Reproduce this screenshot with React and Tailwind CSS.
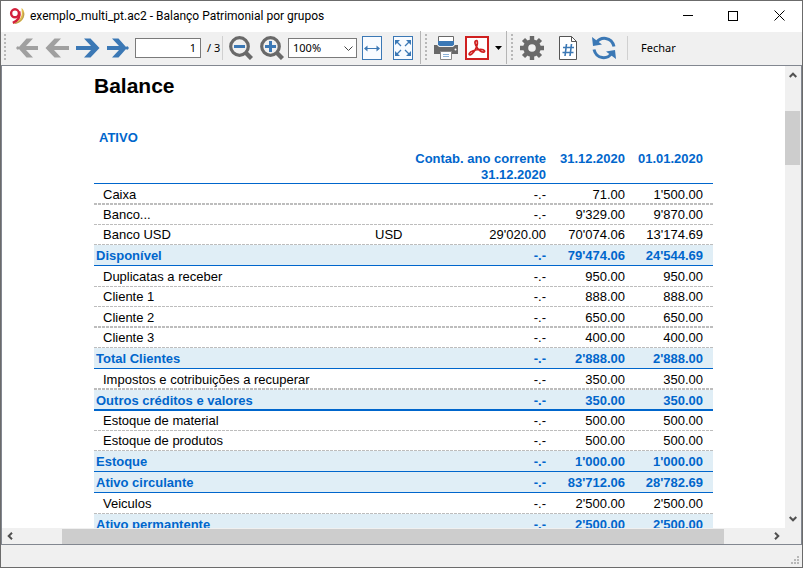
import React from "react";

const rows = [
  { name: "Caixa", v: ["-.-", "71.00", "1'500.00"], h: 21, line: "dash2" },
  { name: "Banco...", v: ["-.-", "9'329.00", "9'870.00"], h: 20 },
  { name: "Banco USD", cur: "USD", v: ["29'020.00", "70'074.06", "13'174.69"], h: 20 },
  { name: "Disponível", v: ["-.-", "79'474.06", "24'544.69"], total: true },
  { name: "Duplicatas a receber", v: ["-.-", "950.00", "950.00"], h: 21 },
  { name: "Cliente 1", v: ["-.-", "888.00", "888.00"], h: 20 },
  { name: "Cliente 2", v: ["-.-", "650.00", "650.00"], h: 21, line: "dash2" },
  { name: "Cliente 3", v: ["-.-", "400.00", "400.00"], h: 20 },
  { name: "Total Clientes", v: ["-.-", "2'888.00", "2'888.00"], total: true },
  { name: "Impostos e cotribuições a recuperar", v: ["-.-", "350.00", "350.00"], h: 21, line: "dash2" },
  { name: "Outros créditos e valores", v: ["-.-", "350.00", "350.00"], total: true, line: "solid2" },
  { name: "Estoque de material", v: ["-.-", "500.00", "500.00"], h: 20 },
  { name: "Estoque de produtos", v: ["-.-", "500.00", "500.00"], h: 20 },
  { name: "Estoque", v: ["-.-", "1'000.00", "1'000.00"], total: true },
  { name: "Ativo circulante", v: ["-.-", "83'712.06", "28'782.69"], total: true },
  { name: "Veiculos", v: ["-.-", "2'500.00", "2'500.00"], h: 21 },
  { name: "Ativo permantente", v: ["-.-", "2'500.00", "2'500.00"], total: true },
];

const dash = "bg-[repeating-linear-gradient(90deg,#bdbdbd_0px,#bdbdbd_3px,transparent_3px,transparent_4px)] bg-no-repeat bg-bottom";
const lineClass = {
  dash1: `${dash} bg-[length:100%_1px]`,
  dash2: `${dash} bg-[length:100%_2px]`,
  solid1: "bg-[#e0eef6] bg-linear-to-r from-[#0066cc] to-[#0066cc] bg-no-repeat bg-bottom bg-[length:100%_1px]",
  solid2: "bg-[#e0eef6] bg-linear-to-r from-[#0066cc] to-[#0066cc] bg-no-repeat bg-bottom bg-[length:100%_2px]",
};

function Row({ row }) {
  const line = row.line || (row.total ? "solid1" : "dash1");
  const height = row.total || row.h === 21 ? "h-[21px]" : "h-5";
  return (
    <tr className={`${height} leading-5 ${lineClass[line]} ${row.total ? "font-bold text-[#0066cc]" : "text-black"}`}>
      <th scope="row" className={`p-0 text-left ${row.total ? "pl-0.5 font-bold" : "pl-[9px] font-normal"}`}>{row.name}</th>
      <td className="p-0">{row.cur}</td>
      <td className="p-0 text-right">{row.v[0]}</td>
      <td className="p-0 text-right">{row.v[1]}</td>
      <td className="p-0 pr-2.5 text-right">{row.v[2]}</td>
    </tr>
  );
}

function Logo() {
  return (
    <svg className="size-4 shrink-0" viewBox="0 0 16 16" fill="none" aria-hidden="true">
      <path d="M12.500 0C15.500 2 16.500 7 14 11c-2 3.500-5.500 5-10 4.700C9 14 12.500 10 12.800 5.500z" fill="#e3bd4a" />
      <path d="M14.500 4.500c1 5-2.500 9.500-8.500 11" stroke="#a8905a" strokeWidth=".8" />
      <ellipse cx="6" cy="5.300" rx="3.900" ry="4" stroke="#d3203c" strokeWidth="2.400" />
      <path d="M10.300 3.500c1.200 5-1 9-6.500 11.300" stroke="#d3203c" strokeWidth="2.400" />
    </svg>
  );
}

function Arrow({ color, flip, end }) {
  return (
    <svg className={`h-5 w-6 ${flip ? "-scale-x-100" : ""}`} viewBox="0 0 24 20" fill={color} aria-hidden="true">
      {end ? (
        <path d="M0 8h12L5 .5h6.500L18.800 8.700h.4a1.600 1.600 0 1 1 0 2.600h-.4L11.500 19.500H5L12 12H0z" />
      ) : (
        <path d="M0 8h15L8 .5h6.500L23.500 10l-9 9.500H8L15 12H0z" />
      )}
    </svg>
  );
}

function Magnifier({ plus }) {
  return (
    <svg className="size-6" viewBox="0 0 24 24" fill="none" aria-hidden="true">
      <circle cx="10.500" cy="10.500" r="8.800" stroke="#696969" strokeWidth="3.200" />
      <path d="M16.500 16.500l6 6" stroke="#696969" strokeWidth="4.400" />
      <path d={plus ? "M5 10.500h11M10.500 5v11" : "M5 10.500h11"} stroke="#3b78b5" strokeWidth="3" />
    </svg>
  );
}

function FitWidth() {
  return (
    <svg className="h-6 w-5" viewBox="0 0 20 24" fill="none" stroke="#3b78b5" aria-hidden="true">
      <rect x=".5" y=".5" width="19" height="23" fill="#f8fbff" />
      <path d="M3 12.500h14" />
      <path d="M5.500 9.500v6l-3.500-3zM14.500 9.500v6l3.500-3z" fill="#3b78b5" stroke="none" />
    </svg>
  );
}

function FitPage() {
  return (
    <svg className="h-6 w-5" viewBox="0 0 20 24" fill="none" stroke="#3b78b5" aria-hidden="true">
      <rect x=".5" y=".5" width="19" height="23" fill="#f8fbff" />
      <path d="M3 5l5 5M17 5l-5 5M3 19l5-5M17 19l-5-5" strokeWidth="1.300" />
      <path d="M2 4h5L2 9zM18 4h-5L18 9zM2 20h5L2 15zM18 20h-5l5-5z" fill="#3b78b5" stroke="none" />
    </svg>
  );
}

function Printer() {
  return (
    <svg className="size-6" viewBox="0 0 24 24" aria-hidden="true">
      <path d="M4.500.5h15V6h-15z" fill="#fff" stroke="#696969" />
      <path d="M0 9h24v9H0z" fill="#696969" />
      <path d="M3 5h18v4l-2 2H5L3 9z" fill="#f0f0f0" />
      <path d="M4 5h16v3.500L18.500 10h-13L4 8.500z" fill="#3b78b5" />
      <path d="M6.500 15.500h11v8h-11z" fill="#fff" stroke="#8a8a8a" />
      <path d="M9 18.500h6M9 20.500h6" stroke="#8db3d8" />
      <circle cx="21.500" cy="13.500" r="1" fill="#fff" />
    </svg>
  );
}

function Pdf() {
  return (
    <svg className="size-6" viewBox="0 0 24 24" fill="none" stroke="#cf2020" aria-hidden="true">
      <rect x="1" y="1" width="22" height="22" fill="#fff" strokeWidth="2" />
      <path d="M10.500 5c2-1.500 2.500 1.300 1.200 5.500-1.400 4-4.500 8-6.500 8.300-2 .2-1.300-2.600 3-4 4.500-1.500 10-2 11.300 0 .8 2-2.500 1.700-5-.5-2.800-2.500-5.800-7.800-4-9.300z" strokeWidth="1.700" />
    </svg>
  );
}

function Gear() {
  return (
    <svg className="size-6" viewBox="0 0 24 24" fill="none" stroke="#696969" aria-hidden="true">
      <circle cx="12" cy="12" r="6.300" strokeWidth="5" />
      <path d="M12 0v5M12 19v5M0 12h5M19 12h5M3.500 3.500l3.500 3.500M17 17l3.500 3.500M20.500 3.500L17 7M7 17l-3.500 3.500" strokeWidth="4.400" />
    </svg>
  );
}

function PageNumber() {
  return (
    <svg className="h-6 w-[18px]" viewBox="0 0 18 24" fill="none" aria-hidden="true">
      <path d="M.5.5h12l5 5v18H.5z" fill="#fff" stroke="#555" />
      <path d="M12.500.5v5h5" stroke="#555" />
      <path d="M7.500 8L6 20M12.500 8L11 20M4 11.500h11M3.500 16.500h11" stroke="#3b78b5" strokeWidth="1.600" />
    </svg>
  );
}

function Refresh() {
  return (
    <svg className="size-6" viewBox="0 0 24 24" fill="none" stroke="#3b78b5" strokeWidth="3" aria-hidden="true">
      <path d="M4.500 6.500C8.500.5 19.500.2 22 10.500" />
      <path d="M19.500 17.500C15.500 23.500 4.500 23.800 2 13.500" />
      <path d="M0 1l1 9 9-1.500zM24 23l-1-9-9 1.500z" fill="#3b78b5" stroke="none" />
    </svg>
  );
}

function Chevron({ className = "" }) {
  return (
    <svg className={`size-2 ${className}`} viewBox="0 0 8 8" fill="none" stroke="#505050" strokeWidth="2" aria-hidden="true">
      <path d="M.7 6L4 2.700 7.300 6" />
    </svg>
  );
}

function Grip() {
  return (
    <span className="h-[27px] w-0.5 shrink-0 bg-[repeating-linear-gradient(180deg,#b8b8b8_0px,#b8b8b8_2px,transparent_2px,transparent_4px)]" />
  );
}

function Tool({ label, children, className = "" }) {
  return (
    <button type="button" aria-label={label} className={`flex shrink-0 items-center justify-center ${className}`}>
      {children}
    </button>
  );
}

export default function App() {
  return (
    <div className="flex h-screen flex-col overflow-hidden border border-[#6b6b6b] bg-[#f0f0f0] text-black">
      <header className="flex h-[31px] shrink-0 items-center bg-white pb-0.5 pl-2">
        <Logo />
        <h1 className="ml-[5px] grow whitespace-nowrap font-[Roboto,'Noto_Sans',sans-serif] text-[12px] leading-4">
          exemplo_multi_pt.ac2 - Balanço Patrimonial por grupos
        </h1>
        <Tool label="Minimizar" className="h-full w-[45px]">
          <span className="h-px w-2.5 bg-black" />
        </Tool>
        <Tool label="Maximizar" className="h-full w-[46px]">
          <span className="size-2.5 border border-black" />
        </Tool>
        <Tool label="Fechar janela" className="h-full w-[46px]">
          <svg className="size-[11px]" viewBox="0 0 11 11" stroke="#000" aria-hidden="true">
            <path d="M.5.5l10 10M10.500.5l-10 10" />
          </svg>
        </Tool>
      </header>

      <nav className="flex h-[33px] shrink-0 items-center pb-0.5 pl-[3px] font-['Noto_Sans',sans-serif] text-[11px] leading-4">
        <Grip />
        <div className="ml-2 flex items-center gap-[7px]">
          <Tool label="Primeira página"><Arrow color="#a0a0a0" flip end /></Tool>
          <Tool label="Página anterior"><Arrow color="#a0a0a0" flip /></Tool>
          <Tool label="Próxima página"><Arrow color="#3b78b5" /></Tool>
          <Tool label="Última página"><Arrow color="#3b78b5" end /></Tool>
        </div>
        <input aria-label="Página" defaultValue="1" className="ml-1 h-5 w-[66px] shrink-0 border border-[#7a7a7a] bg-white px-1 text-right outline-none" />
        <span className="ml-1.5 w-[15px] shrink-0 whitespace-nowrap">/ 3</span>
        <span className="h-6 w-px shrink-0 bg-[#d0d0d0]" />
        <div className="ml-1.5 flex items-center gap-[7px]">
          <Tool label="Reduzir"><Magnifier /></Tool>
          <Tool label="Ampliar"><Magnifier plus /></Tool>
        </div>
        <div className="relative ml-1 h-5 w-[69px] shrink-0">
          <select aria-label="Zoom" className="h-5 w-full appearance-none border border-[#7a7a7a] bg-white pl-1 outline-none">
            <option>100%</option>
          </select>
          <svg className="pointer-events-none absolute top-2 right-1 h-[5px] w-[9px]" viewBox="0 0 9 5" fill="none" stroke="#444" aria-hidden="true">
            <path d="M.5.5l4 4 4-4" />
          </svg>
        </div>
        <div className="ml-[5px] flex items-center gap-[11px]">
          <Tool label="Ajustar à largura"><FitWidth /></Tool>
          <Tool label="Ajustar à página"><FitPage /></Tool>
        </div>
        <span className="ml-[7px] h-[33px] w-px shrink-0 bg-[#b5b5b5]" />
        <span className="w-1 shrink-0" />
        <Grip />
        <Tool label="Imprimir" className="ml-[7px]"><Printer /></Tool>
        <Tool label="Exportar PDF" className="ml-[7px]"><Pdf /></Tool>
        <Tool label="Mais formatos" className="ml-1.5">
          <svg className="h-1 w-[7px]" viewBox="0 0 7 4" aria-hidden="true"><path d="M0 0h7L3.500 4z" /></svg>
        </Tool>
        <span className="ml-1 h-[33px] w-px shrink-0 bg-[#b5b5b5]" />
        <span className="w-1 shrink-0" />
        <Grip />
        <Tool label="Configurações" className="ml-[7px]"><Gear /></Tool>
        <Tool label="Numeração" className="ml-[15px]"><PageNumber /></Tool>
        <Tool label="Atualizar" className="ml-[15px]"><Refresh /></Tool>
        <span className="ml-[11px] h-6 w-px shrink-0 bg-[#d0d0d0]" />
        <button type="button" className="ml-[13px]">Fechar</button>
      </nav>

      <div className="flex min-h-0 grow flex-col border border-[#828790]">
        <div className="flex min-h-0 grow">
          <main className="min-w-0 grow overflow-hidden bg-white pl-[92px] font-['Liberation_Sans',Arial,sans-serif] text-[13px]">
            <div className="mr-[72px]">
              <h2 className="pt-2 text-[21px] leading-6 font-bold">Balance</h2>
              <h3 className="pt-8 pl-[5px] text-[13px] leading-4 font-bold text-[#0066cc]">ATIVO</h3>
              <table className="w-full table-fixed border-separate border-spacing-0">
                <colgroup>
                  <col />
                  <col className="w-[35px]" />
                  <col className="w-[136px]" />
                  <col className="w-[79px]" />
                  <col className="w-[88px]" />
                </colgroup>
                <thead>
                  <tr className="h-[34px] align-top leading-4 font-bold text-[#0066cc]">
                    <td className="border-b border-[#0066cc] p-0" />
                    <td className="border-b border-[#0066cc] p-0" />
                    <th scope="col" className="border-b border-[#0066cc] p-0 pt-[5px] text-right whitespace-nowrap">
                      Contab. ano corrente<br />31.12.2020
                    </th>
                    <th scope="col" className="border-b border-[#0066cc] p-0 pt-[5px] text-right">31.12.2020</th>
                    <th scope="col" className="border-b border-[#0066cc] p-0 pt-[5px] pr-2.5 text-right">01.01.2020</th>
                  </tr>
                </thead>
                <tbody>
                  {rows.map((row) => <Row key={row.name} row={row} />)}
                </tbody>
              </table>
            </div>
          </main>
          <div className="flex w-[15px] shrink-0 flex-col items-center bg-[#f0f0f0]">
            <Tool label="Rolar para cima" className="h-[18px] w-full"><Chevron /></Tool>
            <span className="mt-[27px] h-[54px] w-full bg-[#cdcdcd]" />
            <span className="grow" />
            <Tool label="Rolar para baixo" className="h-[18px] w-full"><Chevron className="rotate-180" /></Tool>
          </div>
          <span className="w-px shrink-0 bg-[#f0f0f0]" />
        </div>
        <div className="flex h-4 shrink-0 items-center pr-4">
          <Tool label="Rolar para a esquerda" className="h-full w-4"><Chevron className="-rotate-90" /></Tool>
          <span className="ml-11 h-[15px] grow bg-[#cdcdcd]" />
          <span className="w-11" />
          <Tool label="Rolar para a direita" className="h-full w-[17px]"><Chevron className="rotate-90" /></Tool>
        </div>
      </div>

      <footer className="flex h-[22px] shrink-0 items-end justify-end p-[3px]">
        <svg className="size-2" viewBox="0 0 8 8" fill="#b8b8b8" aria-hidden="true">
          <path d="M6 0h2v2H6zM3 3h2v2H3zM6 3h2v2H6zM0 6h2v2H0zM3 6h2v2H3zM6 6h2v2H6z" />
        </svg>
      </footer>
    </div>
  );
}
